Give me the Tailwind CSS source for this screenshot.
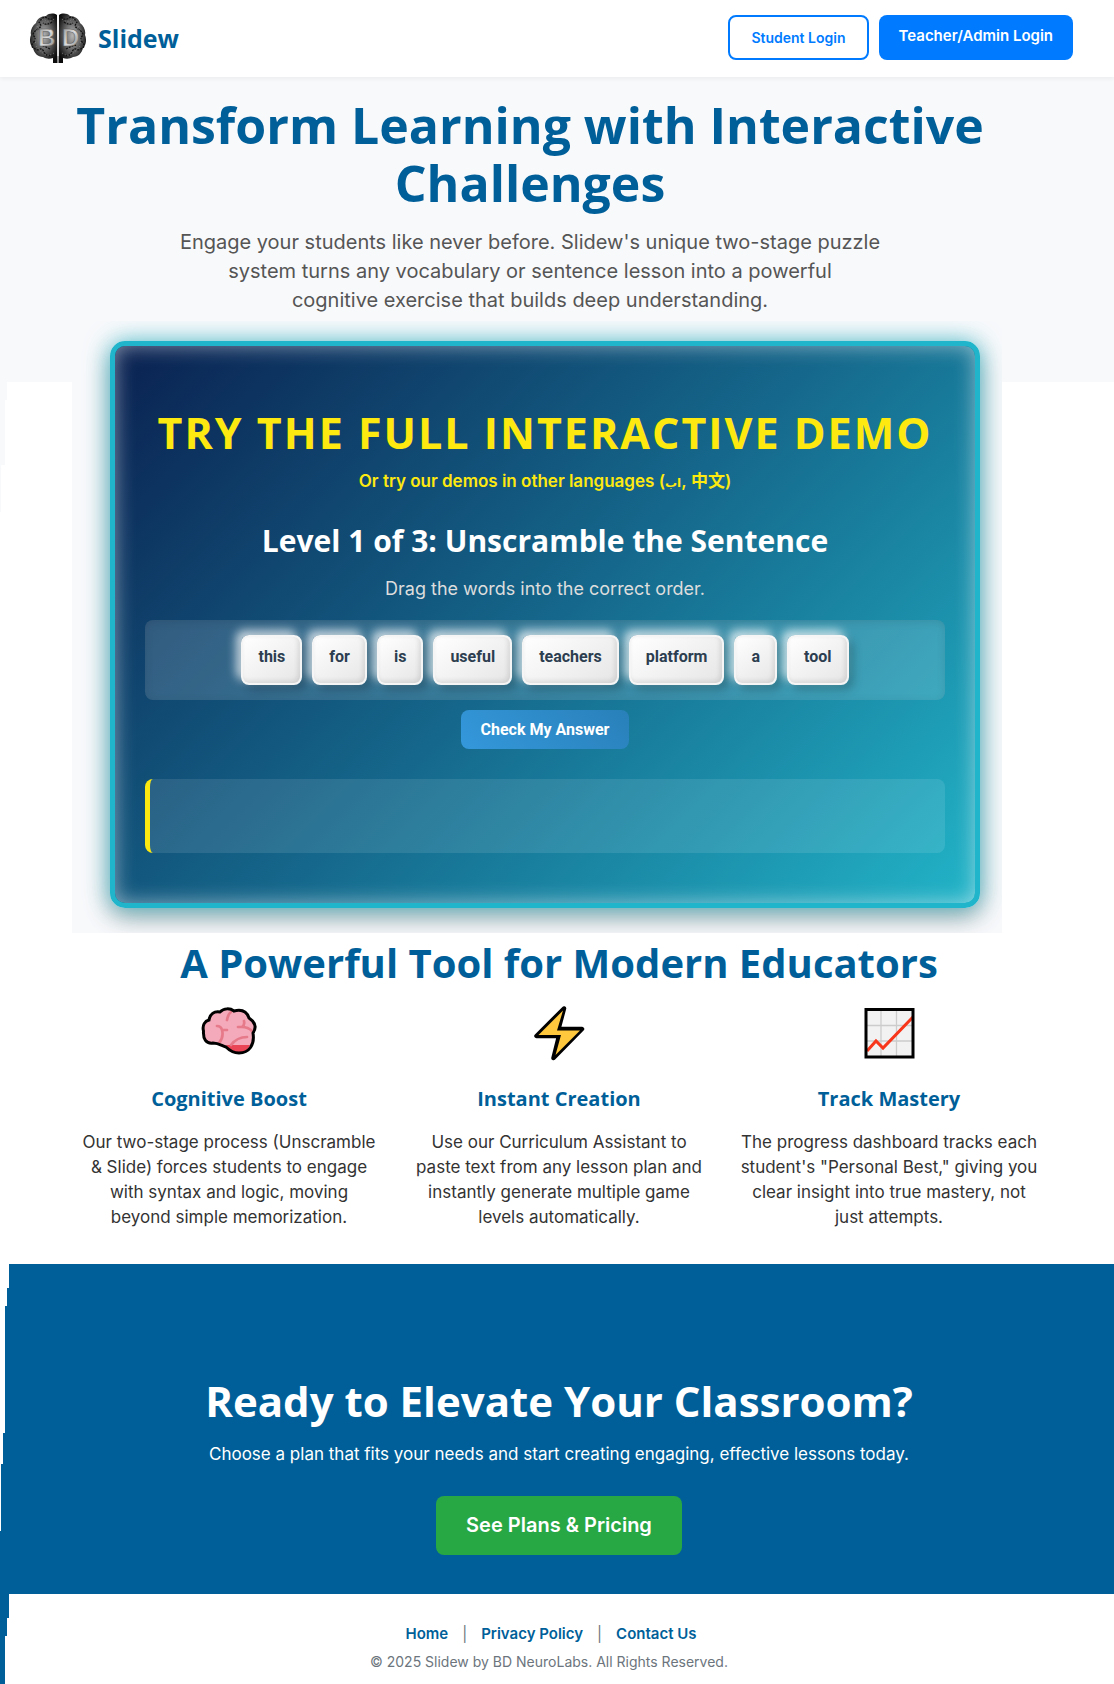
<!DOCTYPE html>
<html lang="en">
<head>
<meta charset="utf-8">
<meta name="viewport" content="width=device-width, initial-scale=1">
<title>Slidew</title>
<script src="https://cdn.jsdelivr.net/npm/@tailwindcss/browser@4"></script>
</head>
<body class="bg-white font-[Inter,sans-serif] text-[17px] leading-[25px] text-[#333]">

<header class="relative z-10 flex items-center justify-between bg-white pt-[15px] pb-[17px] pr-[41px] pl-[30px] shadow-[0_2px_4px_rgba(0,0,0,0.05)]">
  <a href="#" class="-my-2 flex items-center gap-3">
    <svg class="h-[50px] w-14" viewBox="0 0 56 50" aria-hidden="true">
      <defs>
        <radialGradient id="lobe" cx="0.5" cy="0.45" r="0.6">
          <stop offset="0" stop-color="#b5b5b5"/><stop offset="0.45" stop-color="#6a6a6a"/><stop offset="0.85" stop-color="#222"/><stop offset="1" stop-color="#0c0c0c"/>
        </radialGradient>
        <linearGradient id="metal" x1="0" y1="0" x2="1" y2="1">
          <stop offset="0" stop-color="#8b8b8b"/><stop offset="0.5" stop-color="#dcdcdc"/><stop offset="1" stop-color="#777"/>
        </linearGradient>
      </defs>
      <path d="M27 2C24 0 19 0 16 3C11 3 7 6 6 10C2 13 0 18 1 22C-1 27 0 32 3 35C4 40 8 44 13 44C16 46 20 46 23 45V50H27.500Z" fill="url(#lobe)"/>
      <path d="M29 2C32 0 37 0 40 3C45 3 49 6 50 10C54 13 56 18 55 22C57 27 56 32 53 35C52 40 48 44 43 44C40 46 36 46 33 45V50H28.500Z" fill="url(#lobe)"/>
      <g fill="none" stroke="#111" stroke-width="1.300" stroke-dasharray="2 1">
        <path d="M25 4Q21 8 17 5T9 10Q13 13 8 16T3 22Q7 26 3 30T8 37Q12 34 14 39T23 42M22 9Q17 13 13 10M20 36Q15 33 10 32"/>
        <path d="M31 4Q35 8 39 5T47 10Q43 13 48 16T53 22Q49 26 53 30T48 37Q44 34 42 39T33 42M34 9Q39 13 43 10M36 36Q41 33 46 32"/>
      </g>
      <g fill="none" stroke="#999" stroke-width="0.700" stroke-dasharray="1 2">
        <path d="M24 6Q19 10 15 7T7 14Q9 18 5 20M6 33Q10 38 14 41T24 40M5 26Q6 30 5 31"/>
        <path d="M32 6Q37 10 41 7T49 14Q47 18 51 20M50 33Q46 38 42 41T32 40M51 26Q50 30 51 31"/>
      </g>
      <g font-family="Liberation Sans, sans-serif" font-size="24" font-weight="700" fill="url(#metal)" stroke="#555" stroke-width="0.500">
        <text x="8" y="33">B</text><text x="32" y="33">D</text>
      </g>
      <path d="M28 2V43" stroke="#fff" stroke-width="1.200"/>
    </svg>
    <span class="font-['Open_Sans',sans-serif] text-[25px] leading-8 font-bold text-[#005f99]">Slidew</span>
  </a>
  <nav class="flex items-stretch gap-[10px] leading-[21px] font-semibold">
    <a href="#" class="rounded-lg border-2 border-[#007bff] px-[21px] py-[10px] text-sm leading-[21px] text-[#007bff]">Student Login</a>
    <a href="#" class="rounded-lg bg-[#007bff] px-5 py-[10px] text-[15px] text-white">Teacher/Admin Login</a>
  </nav>
</header>

<main>
  <section class="bg-[#f8f9fb] pt-[19px] pr-[54px] pb-[67px] text-center">
    <h1 class="mx-auto max-w-[930px] font-['Open_Sans',sans-serif] text-[50px] leading-[58px] font-bold text-[#005f99]">Transform Learning with Interactive Challenges</h1>
    <p class="mx-auto mt-4 max-w-[704px] text-xl leading-[29px] text-[#555]">Engage your students like never before. Slidew's unique two-stage puzzle system turns any vocabulary or sentence lesson into a powerful<br>cognitive exercise that builds deep understanding.</p>
  </section>

  <div class="relative -mt-[61px] pr-10">
    <svg class="absolute top-[61px] left-0 h-[130px] w-[7px]" viewBox="0 0 7 130" shape-rendering="crispEdges" aria-hidden="true"><path d="M0 0H7V18H5V83H1V130H0Z" fill="#f8f9fb"/></svg>
    <div class="mx-auto max-w-[930px] overflow-hidden bg-[#f8f9fb] pt-5 pr-[22px] pb-[25px] pl-[38px]">
      <section class="rounded-[15px] border-[5px] border-[#20b5ca] bg-[linear-gradient(135deg,#0a2050_0%,#15678b_50%,#22b5c9_100%)] bg-origin-border px-[30px] pt-[62px] pb-[50px] text-center shadow-[0_0_25px_rgba(32,181,202,0.7),0_10px_25px_rgba(0,0,0,0.3),inset_0_0_20px_rgba(255,255,255,0.5)]">
        <h2 class="font-['Open_Sans',sans-serif] text-[43px] leading-[50px] font-bold tracking-[2px] text-[#fde910]">TRY THE FULL INTERACTIVE DEMO</h2>
        <a href="#" class="mt-[11px] block font-[Inter,'DejaVu_Sans','Noto_Sans_CJK_SC',sans-serif] leading-6 font-semibold text-[#fde910]">Or try our demos in other languages (<span class="text-xs">اب</span>, 中文)</a>
        <h3 class="mt-[30px] font-['Open_Sans',sans-serif] text-3xl leading-9 font-bold text-white">Level 1 of 3: Unscramble the Sentence</h3>
        <p class="mt-4 text-lg leading-7 text-[#ddd]">Drag the words into the correct order.</p>
        <div class="mt-[17px] flex flex-wrap justify-center gap-[10px] rounded-lg bg-white/15 py-[15px] font-[Roboto,sans-serif] text-base leading-5 font-bold text-[#2c3e50] shadow-[inset_0_2px_10px_rgba(0,0,0,0.1)] [&>button]:rounded-lg [&>button]:border-2 [&>button]:border-[#f5f5f5] [&>button]:bg-linear-[145deg,#ffffff,#e6e6e6] [&>button]:px-[15px] [&>button]:pt-[10px] [&>button]:pb-4 [&>button]:shadow-[5px_5px_10px_rgba(0,0,0,0.2),-5px_-5px_10px_rgba(255,255,255,0.7),inset_-2px_-2px_5px_rgba(0,0,0,0.1)]">
          <button type="button">this</button>
          <button type="button">for</button>
          <button type="button">is</button>
          <button type="button">useful</button>
          <button type="button">teachers</button>
          <button type="button">platform</button>
          <button type="button">a</button>
          <button type="button">tool</button>
        </div>
        <button type="button" class="mx-auto mt-[10px] block rounded-lg bg-linear-[45deg,#3498db,#2980b9] px-5 py-[9px] font-[Roboto,sans-serif] text-base leading-[21px] font-bold text-white">Check My Answer</button>
        <div class="mt-[30px] min-h-[74px] rounded-lg border-l-[5px] border-[#fde910] bg-white/10" role="status"></div>
      </section>
    </div>
  </div>

  <section class="pt-[6px] pb-[34px] pl-1 text-center">
    <h2 class="font-['Open_Sans',sans-serif] text-[40px] leading-[48px] font-bold text-[#005f99]">A Powerful Tool for Modern Educators</h2>
    <div class="mx-auto mt-4 grid max-w-[960px] grid-cols-3 gap-[30px]">
      <article>
        <svg class="mx-auto size-[60px]" viewBox="0 0 60 60" aria-hidden="true">
          <path d="M14 40C7 41 4 36 4.500 28C3 22 6 18 10 17C11 11 15 8 21 9C25 5 31 5 35 8C43 6 48 9 50 15C56 19 58 24 55 30C56 42 50 50 40 50C34 50 30 47 27 44C23 43 20 40 14 40Z" fill="#f4aaba"/>
          <path d="M27 42H51C48 48 45 50 40 50C34 50 30 47 27 42Z" fill="#ea4557"/>
          <g fill="none" stroke="#e67a8a" stroke-width="2.700" stroke-linecap="round"><path d="M32 9C29 11 29 13 28 17M18 23Q22 23 23 27H28M23 27Q25 34 20 40M45 18Q46 22 43 24H39M43 24Q49 24 53 28M32 42Q38 34 48 34"/></g>
          <path d="M14 40C7 41 4 36 4.500 28C3 22 6 18 10 17C11 11 15 8 21 9C25 5 31 5 35 8C43 6 48 9 50 15C56 19 58 24 54 30C56 42 50 50 40 50C34 50 30 47 27 44C23 43 20 40 14 40Z" fill="none" stroke="#000" stroke-width="3"/>
        </svg>
        <h3 class="mt-[22px] font-['Open_Sans',sans-serif] text-xl leading-7 font-bold text-[#005f99]">Cognitive Boost</h3>
        <p class="mt-[17px]">Our two-stage process (Unscramble &amp; Slide) forces students to engage with syntax and logic, moving beyond simple memorization.</p>
      </article>
      <article>
        <svg class="mx-auto size-[60px]" viewBox="0 0 60 60" aria-hidden="true">
          <path d="M35 5.500L7.500 33H30L24.500 55L53 26H29.500Z" fill="#000" stroke="#000" stroke-width="4.500" stroke-linejoin="round"/>
          <path d="M34 7.500L9.500 32H32L26.500 52L51 27.500H28Z" fill="#ffc83d"/>
        </svg>
        <h3 class="mt-[22px] font-['Open_Sans',sans-serif] text-xl leading-7 font-bold text-[#005f99]">Instant Creation</h3>
        <p class="mt-[17px]">Use our Curriculum Assistant to paste text from any lesson plan and instantly generate multiple game levels automatically.</p>
      </article>
      <article>
        <svg class="mx-auto size-[60px]" viewBox="0 0 60 60" aria-hidden="true">
          <path d="M7 6.500H54V54H7Z" fill="#f2f2f2"/>
          <path d="M22 6V54M37.500 6V54M7 22.500H54M7 38H54" stroke="#ccc" stroke-width="1.300"/>
          <path d="M8 48L17 38L24 45L54 14" fill="none" stroke="#f8361b" stroke-width="3"/>
          <path d="M7 6.500H54V54H7Z" fill="none" stroke="#000" stroke-width="3"/>
        </svg>
        <h3 class="mt-[22px] font-['Open_Sans',sans-serif] text-xl leading-7 font-bold text-[#005f99]">Track Mastery</h3>
        <p class="mt-[17px]">The progress dashboard tracks each student's "Personal Best," giving you clear insight into true mastery, not just attempts.</p>
      </article>
    </div>
  </section>

  <section class="relative bg-[#005f99] pt-[112px] pb-[39px] pl-1 text-center text-white">
    <svg class="absolute top-0 left-0 h-[267px] w-[9px]" viewBox="0 0 9 267" shape-rendering="crispEdges" aria-hidden="true"><path d="M0 0H9V24H7V42H5V169H3V200H1V267H0Z" fill="#fff"/></svg>
    <h2 class="font-['Open_Sans',sans-serif] text-[42px] leading-[50px] font-bold">Ready to Elevate Your Classroom?</h2>
    <p class="mt-4 leading-6">Choose a plan that fits your needs and start creating engaging, effective lessons today.</p>
    <a href="#" class="mt-[30px] inline-block rounded-lg bg-[#28a745] px-[30px] py-4 align-top text-xl leading-[27px] font-semibold">See Plans &amp; Pricing</a>
  </section>
</main>

<footer class="relative overflow-hidden pt-7 pr-4 pb-[10px] text-center text-sm leading-6 text-[#6c757d]">
  <svg class="absolute top-0 left-0 h-[267px] w-[9px]" viewBox="0 0 9 267" shape-rendering="crispEdges" aria-hidden="true"><path d="M0 0H9V24H7V42H5V169H3V200H1V267H0Z" fill="#005f99"/></svg>
  <nav class="flex justify-center gap-[14px] pl-1 text-[15px] [&>a]:font-semibold [&>a]:text-[#005f99]">
    <a href="#">Home</a><span>|</span><a href="#">Privacy Policy</a><span>|</span><a href="#">Contact Us</a>
  </nav>
  <p class="mt-1">© 2025 Slidew by BD NeuroLabs. All Rights Reserved.</p>
</footer>
</body>
</html>
